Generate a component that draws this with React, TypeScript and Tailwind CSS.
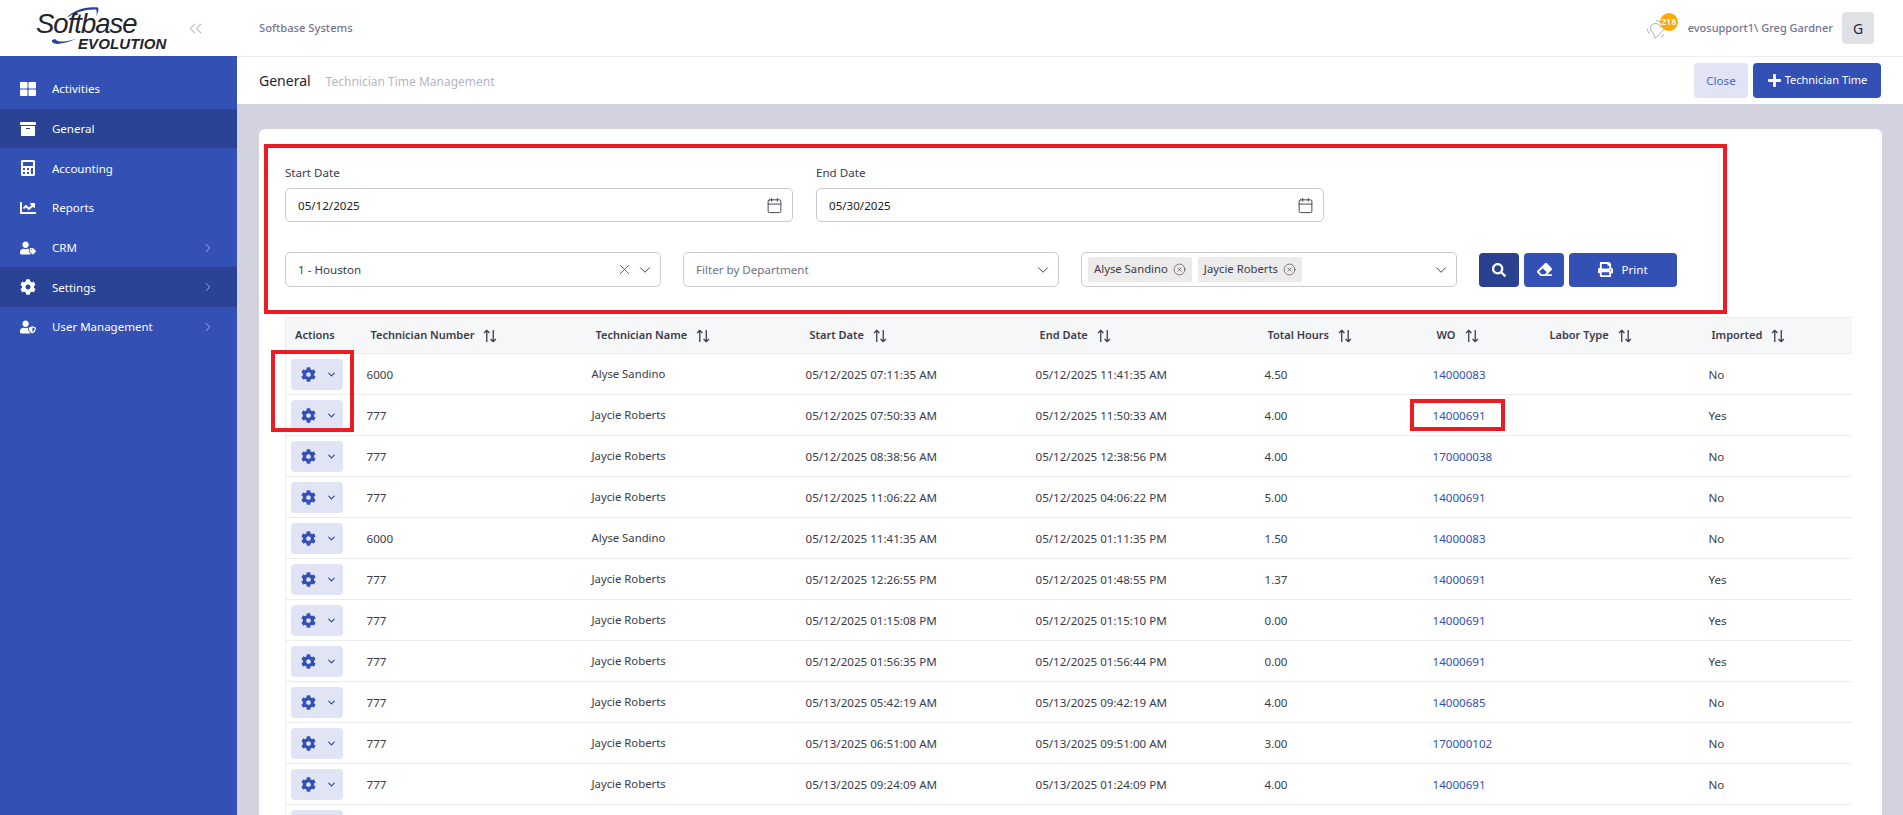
import React from "react";
import { FaThLarge, FaArchive, FaCalculator, FaChartLine, FaUserTag, FaCog, FaUserShield, FaSearch, FaEraser, FaPrint, FaPlus } from "react-icons/fa";
import { ChevronRight, ChevronDown, ChevronsLeft, Calendar, X, CircleX, BellRing } from "lucide-react";

const font = "font-['Noto_Sans','Open_Sans',sans-serif]";

const nav = [
  { label: "Activities", Icon: FaThLarge },
  { label: "General", Icon: FaArchive, active: true },
  { label: "Accounting", Icon: FaCalculator },
  { label: "Reports", Icon: FaChartLine },
  { label: "CRM", Icon: FaUserTag, arrow: true },
  { label: "Settings", Icon: FaCog, arrow: true, active: true },
  { label: "User Management", Icon: FaUserShield, arrow: true },
];

const A = ["6000", "Alyse Sandino"];
const J = ["777", "Jaycie Roberts"];
const rows = [
  [...A, "05/12/2025 07:11:35 AM", "05/12/2025 11:41:35 AM", "4.50", "14000083", "No"],
  [...J, "05/12/2025 07:50:33 AM", "05/12/2025 11:50:33 AM", "4.00", "14000691", "Yes"],
  [...J, "05/12/2025 08:38:56 AM", "05/12/2025 12:38:56 PM", "4.00", "170000038", "No"],
  [...J, "05/12/2025 11:06:22 AM", "05/12/2025 04:06:22 PM", "5.00", "14000691", "No"],
  [...A, "05/12/2025 11:41:35 AM", "05/12/2025 01:11:35 PM", "1.50", "14000083", "No"],
  [...J, "05/12/2025 12:26:55 PM", "05/12/2025 01:48:55 PM", "1.37", "14000691", "Yes"],
  [...J, "05/12/2025 01:15:08 PM", "05/12/2025 01:15:10 PM", "0.00", "14000691", "Yes"],
  [...J, "05/12/2025 01:56:35 PM", "05/12/2025 01:56:44 PM", "0.00", "14000691", "Yes"],
  [...J, "05/13/2025 05:42:19 AM", "05/13/2025 09:42:19 AM", "4.00", "14000685", "No"],
  [...J, "05/13/2025 06:51:00 AM", "05/13/2025 09:51:00 AM", "3.00", "170000102", "No"],
  [...J, "05/13/2025 09:24:09 AM", "05/13/2025 01:24:09 PM", "4.00", "14000691", "No"],
  ["", "", "", "", "", "", ""],
];

const headers = ["Technician Number", "Technician Name", "Start Date", "End Date", "Total Hours", "WO", "Labor Type", "Imported"];

function SortIcon() {
  return (
    <svg width="14" height="14" viewBox="0 0 13 13" fill="none" stroke="#3a3b4a" strokeWidth="1.2" className="ml-[9px] shrink-0">
      <path d="M3.5 12V1.2M1 3.7 3.5 1.2 6 3.7" />
      <path d="M9.5 1v10.8M7 9.3l2.5 2.5L12 9.3" />
    </svg>
  );
}

function Logo() {
  return (
    <div className="relative w-[135px] h-[42px] select-none">
      <svg width="135" height="46" viewBox="0 0 135 46" className="absolute left-0 top-0" fill="none">
        <path d="M30 11C38 3 50 -1 62 0.5C63 3 62 6 60 9C61 6 61 4 60 2.5C50 2 40 5 30 11Z" fill="#2a4190" />
        <path d="M16 33C15 38 24 39 42 31C32 35 22 36 19 32Z" fill="#2a4190" />
      </svg>
      <span className="absolute left-0 top-[6px] text-[27.5px] leading-[22px] italic tracking-[-1px] text-[#23232b] font-['Liberation_Sans',sans-serif]">Softbase</span>
      <span className="absolute left-[42px] top-[30px] text-[15px] leading-[13px] font-bold italic text-[#23232b] tracking-[0.1px] font-['Liberation_Sans',sans-serif]">EVOLUTION</span>
    </div>
  );
}

function SelectBox({ children, className = "" }: { children: React.ReactNode; className?: string }) {
  return (
    <div className={`flex items-center w-[376px] h-[35px] bg-white border border-[#c9cbd0] rounded-[5px] text-[11.6px] ${className}`}>
      <div className="flex-1 flex items-center min-w-0">{children}</div>
      <ChevronDown size={18} strokeWidth={1.3} className="text-[#3a3b4a] mr-[6px]" />
    </div>
  );
}

function Chip({ name }: { name: string }) {
  return (
    <span className="flex items-center h-[25px] px-[6px] bg-[#ecebea] rounded-[2px] text-[#3a3b4a] text-[11.3px] mr-[6px]">
      {name}
      <CircleX size={13} strokeWidth={1.2} className="ml-[5px]" />
    </span>
  );
}

function DateField({ label }: { label: string; }) {
  const value = label === "Start Date" ? "05/12/2025" : "05/30/2025";
  return (
    <div className="w-[508px]">
      <div className="text-[11.6px] leading-[16px] text-[#3a3b4a] mb-[7px]">{label}</div>
      <div className="flex items-center justify-between h-[34px] border border-[#c9cbd0] rounded-[5px] pl-[12px] pr-[9px] text-[11.6px] text-[#1a1a1a]">
        <span className="pt-px">{value}</span>
        <Calendar size={17} strokeWidth={1.3} className="text-[#3a3b4a]" />
      </div>
    </div>
  );
}

export default function App() {
  return (
    <div className={`flex h-[815px] w-full overflow-hidden bg-[#d3d3e0] ${font}`}>
      <aside className="w-[237px] shrink-0 flex flex-col bg-[#3350b5]">
        <div className="h-[56px] bg-white flex items-center pl-[36px] pr-[31px] justify-between">
          <Logo />
          <ChevronsLeft size={21} strokeWidth={1.2} className="text-[#b5b5c3]" />
        </div>
        <nav className="pt-[13px] flex flex-col">
          {nav.map(({ label, Icon, active, arrow }) => (
            <div key={label} className={`h-[39.7px] flex items-center pl-[20px] pr-[22px] text-white text-[11.5px] ${active ? "bg-[#2a4394]" : ""}`}>
              <span className="w-[32px] flex items-center"><Icon size={16} /></span>
              <span className="flex-1">{label}</span>
              {arrow && <ChevronRight size={14} strokeWidth={1.6} className="text-[#a6b5e4]" />}
            </div>
          ))}
        </nav>
      </aside>

      <div className="flex-1 min-w-0 flex flex-col">
        <header className="h-[57px] shrink-0 bg-white border-b border-[#ebedf3] flex items-center justify-between pl-[22px] pr-[29px]">
          <span className="text-[11.2px] font-medium text-[#74748f]">Softbase Systems</span>
          <div className="flex items-center">
            <div className="relative w-[28px] h-[24px] mr-[10px]">
              <BellRing size={19} strokeWidth={0.9} className="absolute left-[-2px] top-[5px] text-[#8f8fa8] -rotate-45" />
              <span className="absolute left-[10px] top-[-3px] w-[18px] h-[18px] rounded-full bg-[#ffa800] text-white text-[9px] font-semibold flex items-center justify-center">218</span>
            </div>
            <span className="text-[11px] font-medium text-[#74748f] mr-[9px]">evosupport1\ Greg Gardner</span>
            <span className="w-[32px] h-[32px] rounded-[4px] bg-[#dfe1e5] flex items-center justify-center text-[14px] text-[#1f2a44]">G</span>
          </div>
        </header>

        <div className="h-[47px] shrink-0 bg-white flex items-center justify-between pl-[22px] pr-[22px]">
          <div className="flex items-baseline">
            <span className="text-[14px] text-[#1f2130] mr-[15px]">General</span>
            <span className="text-[12px] text-[#b5b5c3]">Technician Time Management</span>
          </div>
          <div className="flex items-center">
            <button className="w-[54px] h-[35px] rounded-[4px] bg-[#e0e4f5] text-[#4a63bd] text-[11.6px] mr-[5px]">Close</button>
            <button className="w-[128px] h-[35px] rounded-[4px] bg-[#3350b5] text-white text-[11px] flex items-center justify-center">
              <FaPlus size={15} className="mr-[3px]" />Technician Time
            </button>
          </div>
        </div>

        <main className="flex-1 min-h-0 overflow-hidden pl-[22px] pr-[21px] pt-[25px]">
          <div className="relative bg-white rounded-t-[6px] pl-[26px] pr-[30px] pt-[36px] h-[800px]">
            <div className="flex gap-[23px]">
              <DateField label="Start Date" />
              <DateField label="End Date" />
            </div>
            <div className="flex items-center mt-[30px]">
              <SelectBox className="mr-[22px]">
                <span className="flex-1 pl-[12px] pt-px text-[#3a3b4a]">1 - Houston</span>
                <X size={17} strokeWidth={1.1} className="text-[#3a3b4a] mr-[3px]" />
              </SelectBox>
              <SelectBox className="mr-[22px]">
                <span className="pl-[12px] pt-px text-[#6f7280]">Filter by Department</span>
              </SelectBox>
              <SelectBox className="mr-[22px]">
                <div className="pl-[6px] flex items-center"><Chip name="Alyse Sandino" /><Chip name="Jaycie Roberts" /></div>
              </SelectBox>
              <button className="w-[40px] h-[34px] rounded-[4px] bg-[#2a4190] text-white flex items-center justify-center mr-[5px]"><FaSearch size={14} /></button>
              <button className="w-[40px] h-[34px] rounded-[4px] bg-[#3350b5] text-white flex items-center justify-center mr-[5px]"><FaEraser size={15} /></button>
              <button className="w-[108px] h-[34px] rounded-[4px] bg-[#3350b5] text-white text-[11.6px] flex items-center justify-center"><FaPrint size={15} className="mr-[8px]" />Print</button>
            </div>

            <table className="table-fixed mt-[30px] w-[1566px] border-collapse text-[11.6px] text-[#3a3b4a] border-l border-[#ebedf3]">
              <colgroup>
                <col className="w-[77px]" /><col className="w-[225px]" /><col className="w-[214px]" /><col className="w-[230px]" /><col className="w-[228px]" /><col className="w-[169px]" /><col className="w-[113px]" /><col className="w-[162px]" /><col className="w-[148px]" />
              </colgroup>
              <thead>
                <tr className="h-[36px] bg-[#f6f7f9] border-b border-[#ebedf3] border-t text-[11px]">
                  <th className="pl-[9px] text-left font-semibold">Actions</th>
                  {headers.map((h) => (
                    <th key={h} className="pl-[8px] text-left font-semibold">
                      <span className="flex items-center">{h}<SortIcon /></span>
                    </th>
                  ))}
                </tr>
              </thead>
              <tbody>
                {rows.map((r, i) => (
                  <tr key={i} className="h-[41px] border-b border-[#ebedf3]">
                    <td className="pl-[5px]">
                      <button className="w-[52px] h-[31px] rounded-[4px] bg-[#e0e4f5] text-[#3350b5] flex items-center pl-[10px]">
                        <FaCog size={15} />
                        <ChevronDown size={11} strokeWidth={2.2} className="ml-[10px] text-[#2a4190]" />
                      </button>
                    </td>
                    <td className="pl-[4px] pt-px">{r[0]}</td>
                    <td className="pl-[4px] pt-px text-[11.3px]">{r[1]}</td>
                    <td className="pl-[4px] pt-px">{r[2]}</td>
                    <td className="pl-[4px] pt-px">{r[3]}</td>
                    <td className="pl-[5px] pt-px">{r[4]}</td>
                    <td className="pl-[4px] pt-px text-[#3350b5]">{r[5]}</td>
                    <td className="pl-[4px] pt-px"></td>
                    <td className="pl-[5px] pt-px">{r[6]}</td>
                  </tr>
                ))}
              </tbody>
            </table>

            <div className="absolute left-[5px] top-[15px] w-[1463px] h-[170px] border-[4px] border-[#ec1c24] pointer-events-none" />
            <div className="absolute left-[12px] top-[221px] w-[83px] h-[82px] border-[4px] border-[#ec1c24] pointer-events-none" />
            <div className="absolute left-[1151px] top-[270px] w-[95px] h-[32px] border-[4px] border-[#ec1c24] pointer-events-none" />
          </div>
        </main>
      </div>
    </div>
  );
}
